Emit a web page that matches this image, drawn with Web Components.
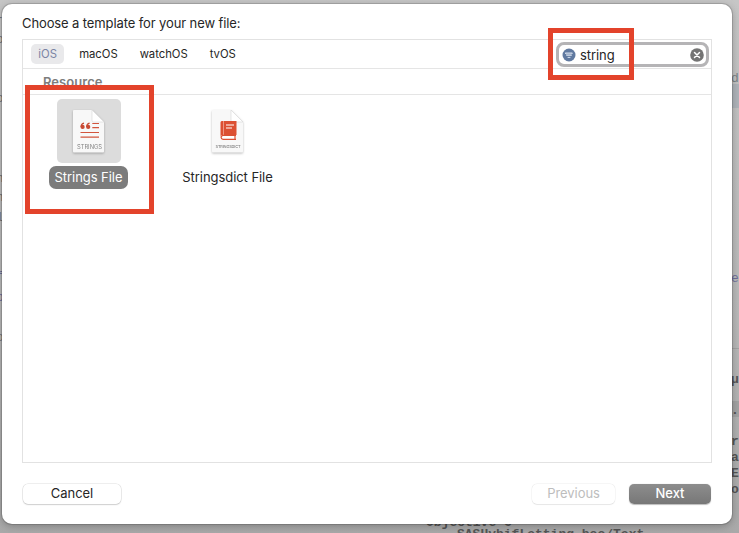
<!DOCTYPE html>
<html lang="en"><head><meta charset="utf-8"><title>New File</title>
<style>
html,body{margin:0;width:739px;height:533px;overflow:hidden;background:#b9b9b9;font-family:Inter,"Liberation Sans",sans-serif;color:#262626}
</style></head><body>
<template-app></template-app>
<script>
const define=(name,html)=>customElements.define(name,class extends HTMLElement{
  connectedCallback(){if(this.shadowRoot)return;const t=document.createElement('template');t.innerHTML=html;
    this.attachShadow({mode:'open'}).append(t.content.cloneNode(true))}});

define('red-frame',`<style>:host{position:absolute;box-sizing:border-box;border:5px solid #e3432b;pointer-events:none}</style>`);

define('editor-text',`<style>:host{position:absolute;font:13px/16px "Liberation Mono",monospace;white-space:pre;color:#555}</style><slot></slot>`);

define('editor-backdrop',`<style>
:host{position:absolute;inset:0;overflow:hidden;background:linear-gradient(#c6c6c6,#b9b9b9 60%,#a9a9a9)}
.line{position:absolute;right:0;width:8px;background:#a3a3a3}
editor-text.b{font-weight:bold}
</style>
<div class="line" style="top:84px;height:24px;background:#afb4ba"></div>
<div class="line" style="top:348px;height:1px"></div>
<div class="line" style="top:401px;height:16px"></div>
<editor-text style="left:731px;top:71px;color:#7c8488">d</editor-text>
<editor-text style="left:731px;top:271px;color:#70709a">e</editor-text>
<editor-text class="b" style="left:731px;top:372px">µ</editor-text>
<editor-text class="b" style="left:731px;top:403px">.</editor-text>
<editor-text class="b" style="left:731px;top:434px">r</editor-text>
<editor-text class="b" style="left:731px;top:450px">a</editor-text>
<editor-text class="b" style="left:731px;top:466px">E</editor-text>
<editor-text class="b" style="left:731px;top:482px">o</editor-text>
<editor-text class="b" style="left:426px;top:515px">Objective-C</editor-text>
<editor-text class="b" style="left:457px;top:527px">SASHybifLetting.boo/Text           .</editor-text>
<editor-text style="left:-4px;top:10px;color:#777">-</editor-text>
<editor-text style="left:-4px;top:32px;color:#777">o</editor-text>
<editor-text style="left:-4px;top:91px;color:#777">o</editor-text>
<editor-text style="left:-4px;top:171px;color:#777">n</editor-text>
<editor-text style="left:-4px;top:190px;color:#777">n</editor-text>
<editor-text style="left:-4px;top:210px;color:#777">l</editor-text>
<editor-text style="left:-4px;top:269px;color:#70709a">f</editor-text>
<editor-text style="left:-4px;top:290px;color:#70709a">p</editor-text>
<editor-text style="left:-4px;top:330px;color:#777">o</editor-text>`);

define('platform-tab',`<style>
:host{display:flex;align-items:center;height:20px;padding:0 7px;border-radius:5px;font-size:11.3px;letter-spacing:-.02px}
:host([selected]){background:#e9e9eb;color:#7b84a4;padding:0 7.3px}
</style><slot></slot>`);

define('search-field',`<style>
:host{display:flex;align-items:center;box-sizing:border-box;width:153px;height:25px;border:3px solid #b5b4b6;border-radius:8px;background:#fff;padding:1px 2px 0 3px;gap:4px;font-size:13px;letter-spacing:-.08px}
.t{flex:1}svg{display:block}
</style>
<svg width="14" height="14" viewBox="0 0 14 14"><circle cx="7" cy="7" r="6.5" fill="#6079a0"/><path d="M3.6 5h6.8L9.6 6H4.4ZM4.6 7.3h4.8M6 9.4h2" fill="none" stroke="#d5dfed" stroke-width="1" stroke-linecap="round"/></svg>
<span class="t"><slot></slot></span>
<svg width="14" height="14" viewBox="0 0 14 14"><circle cx="7" cy="7" r="6.8" fill="#747474"/><path d="M4.5 4.5l5 5M9.5 4.5l-5 5" stroke="#fff" stroke-width="1.5" stroke-linecap="round"/></svg>`);

const fileIcon=(name,art)=>define(name,`<style>:host{display:block;width:36px;height:46px}svg{display:block;overflow:visible;filter:drop-shadow(0 1px 1px #0004)}text{font-family:Inter,sans-serif;fill:#858585}</style>
<svg width="36" height="46" viewBox="0 0 36 46">
<path d="M3 2H21L33 14V43.5Q33 44.5 32 44.5H3Q2 44.5 2 43.5V3Q2 2 3 2Z" fill="#f8f8f8"/>
<path d="M21 2V12.5Q21 14 22.5 14H33Z" fill="#fff" stroke="#ccc" stroke-width=".5"/>${art}</svg>`);

fileIcon('strings-icon',`<path d="M21.3 15.5H28M21.3 19.7H28M9.5 24.5H28M9.5 29.2H28" stroke="#d2553d" stroke-width="1.2"/>
<g fill="#c94a33"><circle cx="11.6" cy="18.9" r="2.1"/><circle cx="17.2" cy="18.9" r="2.1"/></g><path d="M10.1 18.9Q10 15.7 13 15.1M15.7 18.9Q15.6 15.7 18.6 15.1" fill="none" stroke="#c94a33" stroke-width="1.2"/>
<text x="6" y="40.7" font-size="5.8" textLength="25">STRINGS</text>`);

fileIcon('stringsdict-icon',`<path d="M11.8 13H26.5V27H12.3Q10.5 27 10.5 29V14.5Q10.5 13 11.8 13Z" fill="#dc5033"/><path d="M13.5 13V27" stroke="#f5b5a6" stroke-width=".7"/><path d="M16 17H24M16 20H22" stroke="#fff" stroke-width="1.1"/><path d="M26 27.3H13Q11.1 27.5 11.1 29.3T13 31.3H26M25 27.3V31.3" fill="#fff" stroke="#dc5033" stroke-width="1.2"/>
<text x="5.5" y="40.4" font-size="4" textLength="25" style="font-weight:500">STRINGSDICT</text>`);

define('template-item',`<style>
:host{display:flex;flex-direction:column;align-items:center;gap:3px;width:139px}
.tile{width:64px;height:64px;border-radius:5px;display:grid;place-items:center}
.label{height:23px;line-height:23px;padding:0 6px;border-radius:7px;font-size:13px;letter-spacing:-.06px;white-space:nowrap}
:host([selected]) .tile{background:#dcdcdc}:host([selected]) .label{background:#7c7c7c;color:#fff}
</style><div class="tile"><slot name="icon"></slot></div><div class="label"><slot></slot></div>`);

define('push-button',`<style>
:host{display:flex;align-items:center;justify-content:center;box-sizing:border-box;height:20px;padding-bottom:2px;border-radius:5px;background:#fff;font-size:13px;letter-spacing:-.05px;box-shadow:0 0 0 .5px #0002,0 1px 1.5px #0002}
:host([disabled]){color:#bdbdbd;box-shadow:0 0 0 .5px #0001,0 .5px 1px #0001}
:host([primary]){color:#fff;font-weight:500;background:linear-gradient(#8d8d8d,#777);box-shadow:0 .5px 1px #0004}
</style><slot></slot>`);

define('template-dialog',`<style>
:host{position:absolute;left:2px;top:4px;width:730px;height:520px;box-sizing:border-box;border-radius:10px;background:#fff;padding:10px 20px 20px;display:flex;flex-direction:column;box-shadow:0 0 0 1px #0002,0 2px 8px #0004}
h1{font-size:13px;font-weight:400;line-height:19px;margin:0 0 6px;letter-spacing:-.11px}
.panel{height:424px;box-sizing:border-box;border:1px solid #e2e2e2;display:flex;flex-direction:column}
.bar{height:28px;display:flex;align-items:center;padding:0 2px 0 8px;border-bottom:1px solid #e5e5e5}
.tabs{display:flex;gap:8px;flex:1}
.group{height:25px;line-height:26px;padding-left:20px;font-size:13px;letter-spacing:.05px;font-weight:600;color:#7d7d7d;border-bottom:1px solid #e5e5e5}
.grid{display:flex;padding:4px 0 0;margin-left:-4px}
.foot{display:flex;gap:14px;margin-top:21px;padding:0 1px}
.foot i{flex:1}
</style>
<h1>Choose a template for your new file:</h1>
<div class="panel"><div class="bar"><div class="tabs"><platform-tab selected>iOS</platform-tab><platform-tab>macOS</platform-tab><platform-tab>watchOS</platform-tab><platform-tab>tvOS</platform-tab></div><search-field>string</search-field></div>
<div class="group">Resource</div>
<div class="grid"><template-item selected><strings-icon slot="icon"></strings-icon>Strings File</template-item><template-item><stringsdict-icon slot="icon"></stringsdict-icon>Stringsdict File</template-item></div></div>
<div class="foot"><push-button style="width:98px">Cancel</push-button><i></i><push-button disabled style="width:83px">Previous</push-button><push-button primary style="width:82px">Next</push-button></div>`);

define('template-app',`<style>:host{display:block;position:relative;width:739px;height:533px;overflow:hidden}</style>
<editor-backdrop></editor-backdrop><template-dialog></template-dialog>
<red-frame style="left:25px;top:85px;width:129px;height:129px"></red-frame><red-frame style="left:548px;top:28px;width:86px;height:52px"></red-frame>`);
</script></body></html>
